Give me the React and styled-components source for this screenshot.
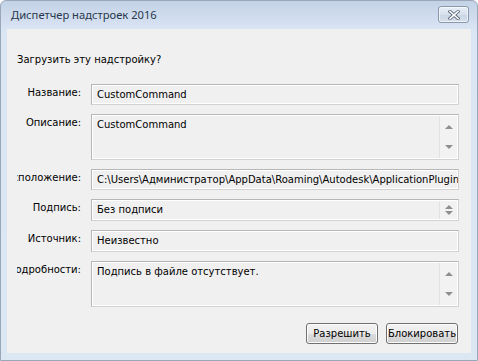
import styled, { createGlobalStyle } from "styled-components";

const GlobalStyle = createGlobalStyle`
  html, body {
    margin: 0;
    padding: 0;
    background: #ffffff;
  }
  * {
    box-sizing: border-box;
  }
`;

const Window = styled.div`
  width: 478px;
  height: 361px;
  display: flex;
  flex-direction: column;
  padding: 0 6px 7px 6px;
  border: 1px solid #9aa7b8;
  border-radius: 6px 6px 0 0;
  background: linear-gradient(180deg, #c3d2e6 0px, #d3dff0 20px, #dbe6f4 30px, #dce7f4 100%);
`;

const TitleBar = styled.div`
  height: 28px;
  display: flex;
  align-items: center;
  justify-content: space-between;
  padding: 0 2px 0 4px;
`;

const Title = styled.span`
  font-family: "Noto Sans", "Open Sans", sans-serif;
  font-size: 11.2px;
  color: #28374b;
  margin-top: -1px;
`;

const CloseButton = styled.div`
  width: 31px;
  height: 17px;
  margin-top: -1px;
  border: 1px solid #8a98ac;
  border-radius: 3px;
  background: linear-gradient(180deg, #e9eff7 0%, #d6e0ec 50%, #cbd6e4 51%, #d6e0ec 100%);
  box-shadow: inset 0 0 0 1px rgba(255, 255, 255, 0.6);
  display: flex;
  align-items: center;
  justify-content: center;
`;

const Client = styled.div`
  flex: 1;
  background: #f0f0f0;
  display: flex;
  flex-direction: column;
  padding: 24px 12px 9px 10px;
  font-family: "DejaVu Sans", Verdana, sans-serif;
  font-size: 10px;
  color: #000000;
`;

const Question = styled.div`
  line-height: 13px;
  height: 13px;
  margin-bottom: 18px;
`;

const Form = styled.div`
  display: grid;
  grid-template-columns: 64px 368px;
  column-gap: 10px;
  row-gap: 9px;
`;

const Label = styled.div`
  display: flex;
  justify-content: flex-end;
  overflow: hidden;
  white-space: nowrap;
  padding-top: 2px;
  line-height: 13px;
  color: #000000;
`;

const Field = styled.div`
  height: ${(p) => p.$h}px;
  display: flex;
  border: 1px solid #b6b6b6;
  border-right-color: #d2d2d2;
  border-bottom-color: #d2d2d2;
  box-shadow: inset 1px 1px 0 #ffffff, inset -1px -1px 0 #ffffff;
  background: #f0f0f0;
  overflow: hidden;
`;

const FieldText = styled.div`
  flex: 1;
  padding: 3px 4px 0 5px;
  line-height: 13px;
  white-space: nowrap;
  overflow: hidden;
`;

const ScrollBar = styled.div`
  width: 18px;
  margin: 1px 1px 1px 0;
  border-left: 1px solid #e2e2e2;
  background: #f2f2f2;
  display: flex;
  flex-direction: column;
  align-items: center;
  justify-content: space-between;
  padding: ${(p) => p.$pad}px 0;
`;

const Arrow = styled.div`
  width: 0;
  height: 0;
  border-left: 4px solid transparent;
  border-right: 4px solid transparent;
  ${(p) =>
    p.$down
      ? "border-top: 4px solid #8f8f8f;"
      : "border-bottom: 4px solid #8f8f8f;"}
`;

const ButtonRow = styled.div`
  margin-top: auto;
  display: flex;
  justify-content: flex-end;
  gap: 8px;
  padding-right: 1px;
`;

const Button = styled.button`
  width: 72px;
  height: 21px;
  padding: 0;
  font-family: "DejaVu Sans", Verdana, sans-serif;
  font-size: 10px;
  color: #000000;
  border: 1px solid #707070;
  border-radius: 3px;
  background: linear-gradient(180deg, #f2f2f2 0%, #ebebeb 50%, #dddddd 51%, #cfcfcf 100%);
  box-shadow: inset 0 0 0 1px #fcfcfc;
`;

const CloseIcon = () => (
  <svg width="12" height="10" viewBox="0 0 12 10">
    <path d="M2 1.5 L10 8.5 M10 1.5 L2 8.5" stroke="#5a6678" strokeWidth="3.2" strokeLinecap="square" />
    <path d="M2 1.5 L10 8.5 M10 1.5 L2 8.5" stroke="#ffffff" strokeWidth="1.6" strokeLinecap="square" />
  </svg>
);

const rows = [
  { label: "Название:", value: "CustomCommand", h: 21 },
  { label: "Описание:", value: "CustomCommand", h: 46, scroll: 9 },
  {
    label: "Расположение:",
    value:
      "C:\\Users\\Администратор\\AppData\\Roaming\\Autodesk\\ApplicationPlugins\\CustomCommand.bundle",
    h: 21,
  },
  { label: "Подпись:", value: "Без подписи", h: 22, scroll: 4 },
  { label: "Источник:", value: "Неизвестно", h: 22 },
  { label: "Подробности:", value: "Подпись в файле отсутствует.", h: 46, scroll: 9 },
];

export default function App() {
  return (
    <>
      <GlobalStyle />
      <Window>
        <TitleBar>
          <Title>Диспетчер надстроек 2016</Title>
          <CloseButton>
            <CloseIcon />
          </CloseButton>
        </TitleBar>
        <Client>
          <Question>Загрузить эту надстройку?</Question>
          <Form>
            {rows.map((r) => (
              <>
                <Label key={r.label + "l"}>
                  <span>{r.label}</span>
                </Label>
                <Field key={r.label + "f"} $h={r.h}>
                  <FieldText>{r.value}</FieldText>
                  {r.scroll && (
                    <ScrollBar $pad={r.scroll}>
                      <Arrow />
                      <Arrow $down />
                    </ScrollBar>
                  )}
                </Field>
              </>
            ))}
          </Form>
          <ButtonRow>
            <Button>Разрешить</Button>
            <Button>Блокировать</Button>
          </ButtonRow>
        </Client>
      </Window>
    </>
  );
}
